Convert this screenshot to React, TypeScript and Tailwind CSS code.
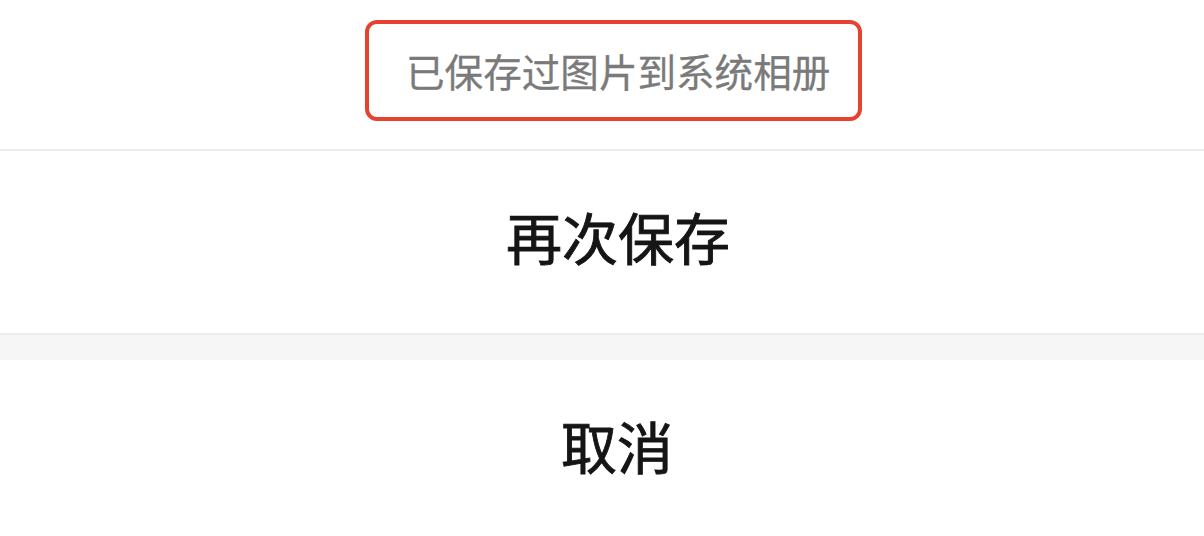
export default function App() {
  const font = { fontFamily: '"Noto Sans CJK SC", "Noto Sans", sans-serif' };
  return (
    <div className="w-[1204px] h-[536px] bg-white overflow-hidden flex flex-col" style={font}>
      {/* notice */}
      <div className="h-[149px] flex justify-center items-start pt-[20px] pl-[23px]">
        <div className="h-[101px] w-[497px] rounded-[12px] border-[4px] border-[#e5432f] flex items-center pl-[37px]">
          <span className="text-[38.6px] leading-none text-[#7a7a7a] [-webkit-text-stroke:0.3px_#7a7a7a]">已保存过图片到系统相册</span>
        </div>
      </div>
      <div className="h-[184px] border-t-2 border-[#ececec] flex items-center justify-center pl-[32px] pb-[12px]">
        <span className="text-[56px] leading-none font-normal text-[#151515] [-webkit-text-stroke:0.9px_#151515]">再次保存</span>
      </div>
      <div className="h-[27px] bg-[#f6f6f6] border-t-2 border-[#ececec]" />
      <div className="flex-1 flex items-center justify-center pl-[30px] pb-[6px]">
        <span className="text-[56px] leading-none font-normal text-[#151515] [-webkit-text-stroke:0.9px_#151515]">取消</span>
      </div>
    </div>
  );
}
